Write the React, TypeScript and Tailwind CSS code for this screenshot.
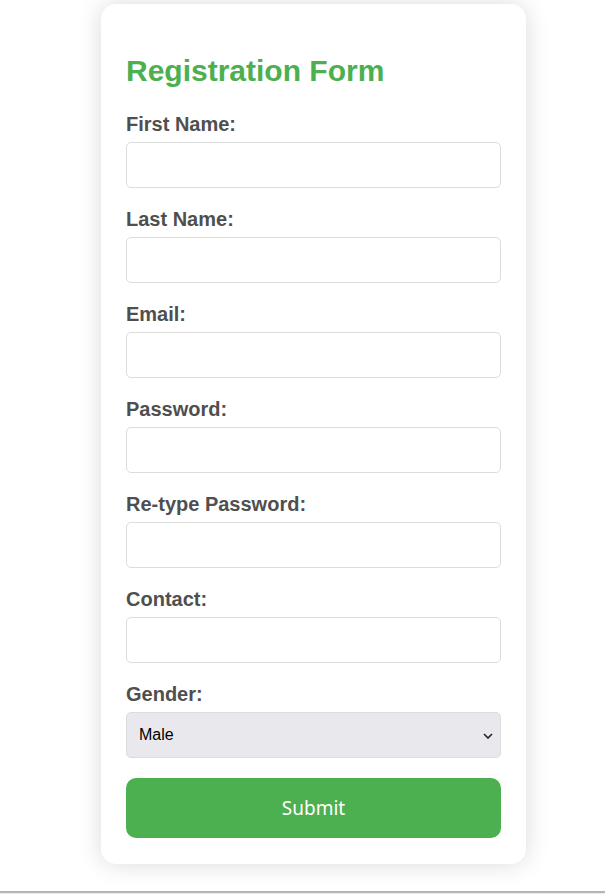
import { useState } from 'react';

// Fields shown in the form, in order
const fields = [
  { id: 'firstName', label: 'First Name:', type: 'text' },
  { id: 'lastName', label: 'Last Name:', type: 'text' },
  { id: 'email', label: 'Email:', type: 'email' },
  { id: 'password', label: 'Password:', type: 'password' },
  { id: 'retype', label: 'Re-type Password:', type: 'password' },
  { id: 'contact', label: 'Contact:', type: 'tel' },
];

export default function App() {
  const [gender, setGender] = useState('Male');

  return (
    <div className="min-h-[894px] bg-white flex flex-col font-['Liberation_Sans',Arial,sans-serif]">
      <div className="flex-1 flex justify-center pt-[4px] pl-[22px]">
        {/* Card */}
        <form className="w-[425px] h-[860px] bg-white rounded-[15px] shadow-[0_0_24px_rgba(0,0,0,0.15)] px-[25px] py-[25px]">
          <h2 className="text-[30px] leading-[34px] font-bold text-[#4CAF50] mt-[25px] mb-[25px]">
            Registration Form
          </h2>

          {fields.map((f) => (
            <div key={f.id} className="mb-[20px]">
              <label htmlFor={f.id} className="block text-[20px] leading-[23px] font-bold text-[#4f4f4f] mb-[6px]">
                {f.label}
              </label>
              <input
                id={f.id}
                type={f.type}
                className="block w-full h-[46px] border border-[#dcdcdc] rounded-[5px] px-[10px] text-[16px] bg-white outline-none"
              />
            </div>
          ))}

          {/* Gender */}
          <div className="mb-[20px]">
            <label htmlFor="gender" className="block text-[20px] leading-[23px] font-bold text-[#4f4f4f] mb-[6px]">
              Gender:
            </label>
            <div className="relative">
              <select
                id="gender"
                value={gender}
                onChange={(e) => setGender(e.target.value)}
                className="block w-full h-[46px] appearance-none border border-[#dcdcdc] rounded-[5px] bg-[#e9e9ed] pl-[12px] text-[16px] text-black font-['Liberation_Sans',Arial,sans-serif] outline-none"
              >
                <option>Male</option>
                <option>Female</option>
                <option>Other</option>
              </select>
              <svg
                className="absolute right-[8px] top-[21px] pointer-events-none"
                width="10"
                height="6"
                viewBox="0 0 10 6"
                fill="none"
              >
                <path d="M1 1l4 4 4-4" stroke="#222" strokeWidth="1.6" />
              </svg>
            </div>
          </div>

          <button
            type="submit"
            className="w-full h-[60px] rounded-[10px] bg-[#4CAF50] text-white text-[19px] font-['Noto_Sans',Tahoma,sans-serif]"
          >
            Submit
          </button>
        </form>
      </div>

      {/* bottom edge line */}
      <div className="h-[3px] border-t-2 border-[#b5b5b5] bg-[#ececec]" />
    </div>
  );
}
